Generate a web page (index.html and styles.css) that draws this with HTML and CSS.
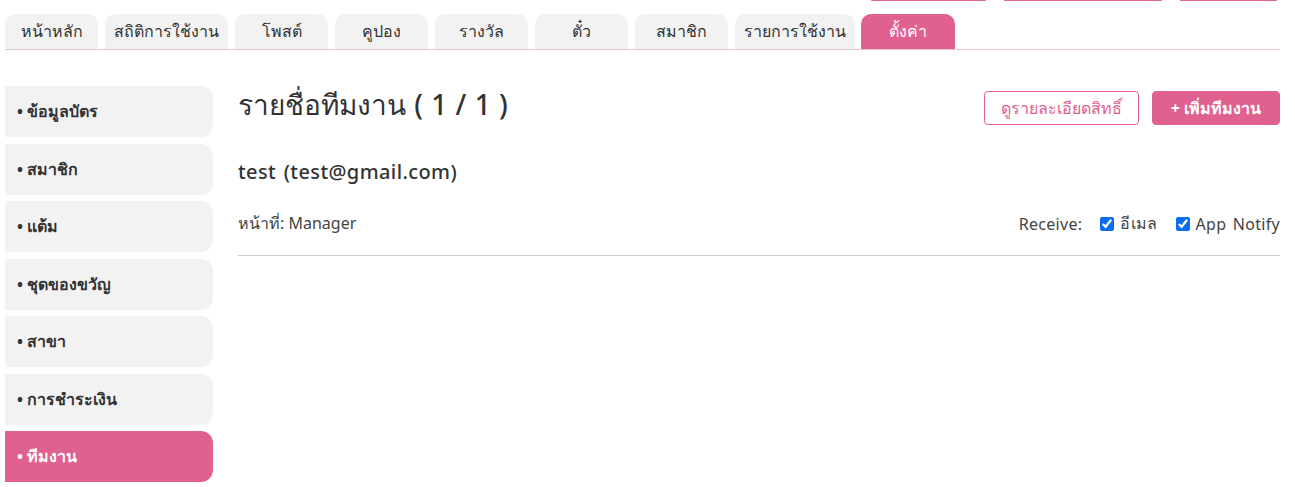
FILE: index.html
```html
<!DOCTYPE html>
<html>
<head>
	<title>ทีมงาน</title>
	<meta charset="UTF-8">
	<meta name="viewport" content="width=device-width, initial-scale=1.0">
	<link rel="stylesheet" href="styles.css">
</head>
<body>
	<div class="topbtns">
		<span class="topbtn w1"></span>
		<span class="topbtn w2"></span>
		<span class="topbtn w3"></span>
	</div>

	<nav class="tabs">
		<a class="tab">หน้าหลัก</a>
		<a class="tab wide">สถิติการใช้งาน</a>
		<a class="tab">โพสต์</a>
		<a class="tab">คูปอง</a>
		<a class="tab">รางวัล</a>
		<a class="tab">ตั๋ว</a>
		<a class="tab">สมาชิก</a>
		<a class="tab wide">รายการใช้งาน</a>
		<a class="tab active">ตั้งค่า</a>
	</nav>

	<div class="layout">
		<aside class="menu">
			<a class="menu-item">• ข้อมูลบัตร</a>
			<a class="menu-item">• สมาชิก</a>
			<a class="menu-item">• แต้ม</a>
			<a class="menu-item">• ชุดของขวัญ</a>
			<a class="menu-item">• สาขา</a>
			<a class="menu-item">• การชำระเงิน</a>
			<a class="menu-item active">• ทีมงาน</a>
		</aside>

		<main class="content">
			<div class="head">
				<h1>รายชื่อทีมงาน ( 1 / 1 )</h1>
				<div class="actions">
					<button class="btn outline">ดูรายละเอียดสิทธิ์</button>
					<button class="btn fill">+ เพิ่มทีมงาน</button>
				</div>
			</div>

			<div class="member">
				<h2>test (test@gmail.com)</h2>
				<div class="row">
					<span>หน้าที่: Manager</span>
					<span class="receive">
						Receive:
						<label><input type="checkbox" checked> อีเมล</label>
						<label><input type="checkbox" checked> App Notify</label>
					</span>
				</div>
			</div>
		</main>
	</div>
</body>
</html>
```

FILE: styles.css
```css
body {
	font-family: "Noto Sans", sans-serif;
	margin: 0;
	padding: 0 15px 0 5px;
	color: #333;
}

.topbtns {
	display: flex;
	justify-content: flex-end;
	gap: 18px;
	height: 2px;
	padding-right: 3px;
}
.topbtn {
	display: block;
	height: 1px;
	background-color: #e06090;
	border-radius: 0 0 4px 4px;
}
.w1 { width: 115px; }
.w2 { width: 158px; }
.w3 { width: 97px; }

.tabs {
	display: flex;
	gap: 7px;
	margin-top: 12px;
	border-bottom: 1px solid #dfc6cf;
}
.tab {
	width: 93px;
	height: 35px;
	line-height: 35px;
	text-align: center;
	font-size: 16px;
	background-color: #f2f2f2;
	border-radius: 10px 10px 0 0;
}
.tab.wide {
	width: 123px;
}
.tab:nth-child(8) {
	width: 120px;
}
.tab.active {
	width: 94px;
	margin-left: -1px;
	background-color: #e06090;
	color: #fff;
}

.layout {
	display: flex;
	gap: 25px;
	margin-top: 36px;
}
.menu {
	display: flex;
	flex-direction: column;
	gap: 6.5px;
	width: 208px;
	flex-shrink: 0;
}
.menu-item {
	display: block;
	height: 51px;
	line-height: 51px;
	padding-left: 12px;
	font-size: 16px;
	font-weight: bold;
	background-color: #f2f2f2;
	border-radius: 0 12px 12px 0;
}
.menu-item.active {
	background-color: #e06090;
	color: #fff;
}

.content {
	flex: 1;
}
.head {
	display: flex;
	justify-content: space-between;
	align-items: flex-start;
}
h1 {
	font-size: 28px;
	font-weight: 500;
	margin: 0;
	line-height: 36px;
	word-spacing: 1px;
}
.actions {
	display: flex;
	gap: 13px;
	margin-top: 5px;
}
.btn {
	font-family: inherit;
	font-size: 16px;
	height: 34px;
	padding: 0 14px;
	border-radius: 4px;
	border: 1px solid #e06090;
}
.outline {
	background: #fff;
	color: #e06090;
	width: 155px;
}
.fill {
	background: #e06090;
	color: #fff;
	font-weight: bold;
	width: 128px;
}

.member {
	margin-top: 33px;
	border-bottom: 1px solid #ccc;
	padding-bottom: 19px;
}
h2 {
	font-size: 20px;
	font-weight: 500;
	letter-spacing: 0.4px;
	word-spacing: 2px;
	margin: 0 0 26px;
}
.row {
	display: flex;
	justify-content: space-between;
	font-size: 16px;
	font-weight: normal;
	color: #444;
}
.receive {
	display: flex;
	align-items: center;
	letter-spacing: 0.3px;
	word-spacing: 2px;
}
.receive label {
	display: flex;
	align-items: center;
	margin-left: 18px;
}
.receive input {
	width: 14px;
	height: 14px;
	margin: 0 6px 0 0;
	accent-color: #0a6cf0;
}
```
